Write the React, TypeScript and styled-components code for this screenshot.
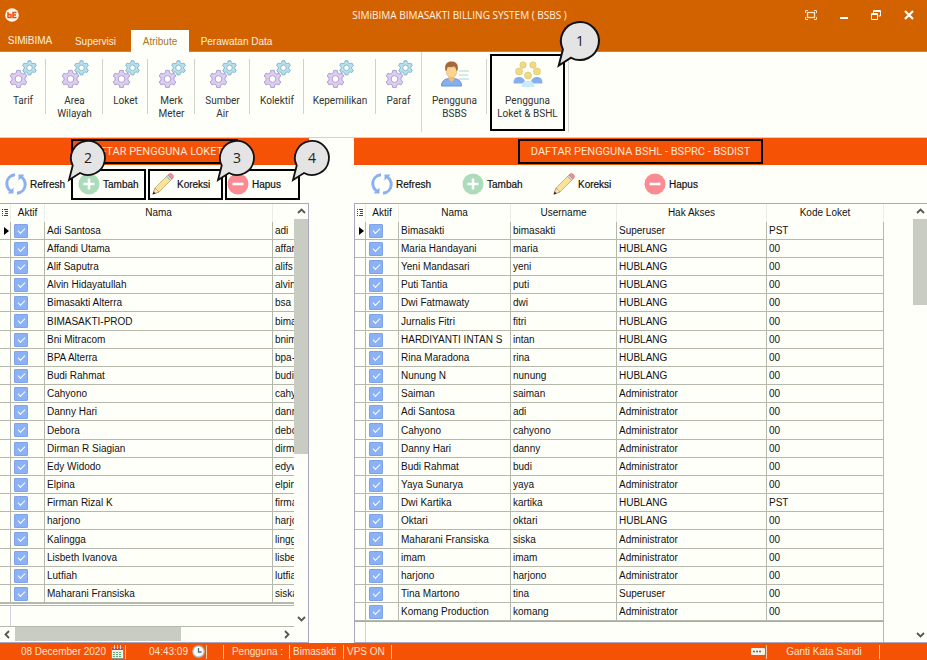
import React from 'react';
import styled, { createGlobalStyle } from 'styled-components';

const paper = '#fffffa';
const rust = '#d26200';
const flame = '#f55206';
const line = '#b5b9ac';
const lilac = '#aaa6bd';
const shade = '#c9ccc2';

const GlobalStyle = createGlobalStyle`
  *, *::before, *::after { box-sizing: border-box; }
  body { margin: 0; background: ${paper}; }
  button, input { font: inherit; color: inherit; }
  button { border: 0; padding: 0; background: none; cursor: pointer; }
  svg { display: block; }
`;

const Shell = styled.div`
  min-height: 100vh;
  display: flex;
  flex-direction: column;
  background: ${paper};
  color: #222;
  font: 10px/13px "Liberation Sans", Arial, sans-serif;
`;

/* ---------- title bar and tabs ---------- */

const Header = styled.header`
  background: ${rust};
  color: #fff3e4;
  border-bottom: 1px solid #c98250;
`;

const TitleBar = styled.div`
  height: 29px;
  display: grid;
  grid-template-columns: 1fr auto 1fr;
  align-items: center;
  padding: 0 13px 0 5px;
`;

const AppTitle = styled.h1`
  margin: 0;
  font: 400 10px/16px "Open Sans", "Noto Sans", sans-serif;
`;

const WindowButtons = styled.div`
  display: flex;
  justify-content: flex-end;
  gap: 23px;
`;

const Tabs = styled.nav`
  display: flex;
  align-items: flex-end;
  height: 22px;
`;

const Tab = styled.button<{ $active?: boolean; $lift?: boolean; $width: number }>`
  width: ${p => p.$width}px;
  height: 22px;
  padding-bottom: ${p => (p.$lift ? 2 : 0)}px;
  margin-bottom: -1px;
  color: ${p => (p.$active ? '#a8742c' : '#ffeedd')};
  background: ${p => (p.$active ? paper : 'transparent')};
`;

/* ---------- ribbon ---------- */

const Ribbon = styled.div`
  display: flex;
  height: 86px;
  border-bottom: 1px solid #d9cfc4;
`;

const RibbonGroup = styled.div`
  display: flex;
  height: 80px;
  border-right: 1px solid #d4d6cf;
`;

const RibbonItem = styled.button<{ $width: number; $ruled?: boolean; $marked?: boolean }>`
  position: relative;
  width: ${p => p.$width}px;
  height: ${p => (p.$marked ? 77 : 80)}px;
  margin: ${p => (p.$marked ? '2px 3px 0' : '0')};
  padding-top: ${p => (p.$marked ? 4 : 8)}px;
  border: ${p => (p.$marked ? '2px solid #000' : '0')};
  display: flex;
  flex-direction: column;
  align-items: center;
  gap: 6px;
  color: #333;
  font: 10px/13px Roboto, "Liberation Sans", sans-serif;
  text-align: center;
  white-space: pre-line;

  &::after {
    content: ${p => (p.$ruled ? '""' : 'none')};
    position: absolute;
    top: 7px;
    right: 0;
    height: 55px;
    border-right: 1px solid #d0d3ca;
  }
`;

/* ---------- panels ---------- */

const Panels = styled.main`
  flex: 1;
  display: grid;
  grid-template-columns: minmax(0, 309fr) minmax(0, 573fr);
  column-gap: 45px;
`;

const Panel = styled.section`
  display: flex;
  flex-direction: column;
`;

const PanelHead = styled.div`
  display: flex;
  justify-content: center;
  align-items: center;
  height: 27px;
  background: ${flame};
`;

const PanelTitle = styled.h2<{ $width: number }>`
  margin: 0;
  min-width: ${p => p.$width}px;
  text-align: center;
  border: 2px solid #000;
  color: #ffe6d2;
  font: 400 11px/21px Roboto, "Liberation Sans", sans-serif;
  white-space: nowrap;
`;

const Tools = styled.div<{ $roomy?: boolean }>`
  display: flex;
  align-items: center;
  height: 38px;
  gap: ${p => (p.$roomy ? 16 : 2)}px;
  padding-left: ${p => (p.$roomy ? 17 : 0)}px;
`;

const Tool = styled.button<{ $marked?: boolean; $pad?: number; $width?: number }>`
  position: relative;
  display: flex;
  align-items: center;
  gap: 3px;
  width: ${p => p.$width ?? 75}px;
  height: 31px;
  padding-left: ${p => p.$pad ?? 0}px;
  border: ${p => (p.$marked ? '2px solid #000' : '0')};
  color: #111;
  -webkit-text-stroke: 0.2px #111;
`;

const CalloutBox = styled.span<{ $x: number; $y: number; $size: number }>`
  position: absolute;
  z-index: 2;
  left: ${p => p.$x}px;
  top: ${p => p.$y}px;
  width: ${p => p.$size}px;
  height: ${p => p.$size}px;
  display: grid;
  place-items: center;
  color: #222;
  font: 14px/18px "Open Sans", "Noto Sans", sans-serif;
  -webkit-text-stroke: 0;

  svg { position: absolute; inset: 0; overflow: visible; }
  b { position: relative; font-weight: 400; }
`;

/* ---------- data grids ---------- */

const GridFrame = styled.div<{ $side: 'left' | 'right' }>`
  flex: 1;
  display: flex;
  border: 0 solid ${lilac};
  border-top-width: 1px;
  border-bottom-width: 1px;
  border-${p => (p.$side === 'left' ? 'right' : 'left')}-width: 1px;
`;

const GridMain = styled.div<{ $inset: number }>`
  flex: 1;
  min-width: 0;
  display: flex;
  flex-direction: column;
  overflow: hidden;
  margin-right: ${p => p.$inset}px;
`;

const Table = styled.table<{ $width: string }>`
  width: ${p => p.$width};
  table-layout: fixed;
  border-collapse: separate;
  border-spacing: 0;
  color: #111;

  th {
    height: 18px;
    padding: 0 0 1px;
    font-weight: 400;
    border-right: 1px solid #eceee6;
  }
  td {
    height: 18px;
    padding: 0 2px;
    line-height: 13px;
    white-space: nowrap;
    overflow: hidden;
    border-right: 1px solid ${line};
    border-bottom: 1px solid ${line};
  }
  tr:nth-child(6n) td { height: 19px; }
  td:first-child { padding: 0 0 0 2px; }
  svg { margin: 0 auto 0 2px; }
`;

const Tick = styled.input`
  appearance: none;
  position: relative;
  display: block;
  width: 14px;
  height: 14px;
  margin: 0 0 0 1px;
  border: 1px solid #7ea4e6;
  border-radius: 1px;
  background: #8bb1f6;

  &:checked::after {
    content: "";
    position: absolute;
    left: 3px;
    top: 3px;
    width: 7px;
    height: 4px;
    border: solid #fff;
    border-width: 0 0 1px 1px;
    transform: rotate(-45deg);
  }
`;

const GridFoot = styled.div<{ $double?: boolean }>`
  flex: 1;
  border-top: ${p => (p.$double ? `3px double ${line}` : `1px solid ${lilac}`)};
  border-right: ${p => (p.$double ? '0' : `1px solid ${line}`)};
  padding-left: 10px;

  &::before {
    content: "";
    display: block;
    height: 100%;
    border-left: 1px solid #d3d0e2;
  }
`;

const HScroll = styled.div`
  display: flex;
  height: 16px;
  border-top: 1px solid ${line};
`;

const VScroll = styled.div<{ $foot: number }>`
  display: flex;
  flex-direction: column;
  width: 14px;
  padding-bottom: ${p => p.$foot}px;
`;

const ArrowButton = styled.button`
  display: grid;
  place-items: center;
  min-width: 15px;
  height: 15px;
`;

const Track = styled.div`
  flex: 1;
`;

const Thumb = styled.div<{ $w: string; $h: string }>`
  width: ${p => p.$w};
  height: ${p => p.$h};
  background: ${shade};
`;

/* ---------- status bar ---------- */

const StatusBar = styled.footer`
  display: flex;
  align-items: center;
  height: 17px;
  background: ${flame};
  color: #ffe3cf;
`;

const StatusCell = styled.div<{ $width: number; $end?: boolean; $gap?: number }>`
  display: flex;
  align-items: center;
  justify-content: ${p => (p.$end ? 'flex-end' : 'flex-start')};
  gap: ${p => p.$gap ?? 4}px;
  width: ${p => p.$width}px;
  height: 14px;
  padding: 0 1px 0 3px;
  border-right: 1px solid #ffc9a4;
  white-space: nowrap;
`;

const StatusEnd = styled.div`
  width: 47px;
`;

const PasswordLink = styled.a`
  width: 100%;
  text-align: center;
  color: inherit;
  text-decoration: none;
`;

const Spacer = styled.div`
  flex: 1;
`;

/* ---------- drawings ---------- */

function gearPath(cx: number, cy: number, outer: number, inner: number) {
  const pts: string[] = [];
  for (let i = 0; i < 6; i++) {
    const a = (i * Math.PI) / 3 - Math.PI / 2;
    const steps: [number, number][] = [[-0.32, inner], [-0.2, outer], [0.2, outer], [0.32, inner]];
    steps.forEach(([d, r]) => {
      pts.push(`${(cx + r * Math.cos(a + d)).toFixed(2)} ${(cy + r * Math.sin(a + d)).toFixed(2)}`);
    });
  }
  return `M${pts.join('L')}Z`;
}

const Gears = () => (
  <svg width="28" height="28" viewBox="0 0 28 28" aria-hidden="true">
    <path d={gearPath(20.5, 7.8, 7.2, 5.4)} fill="#b9e0f0" stroke="#86b8cc" />
    <circle cx="20.5" cy="7.8" r="2.8" fill={paper} stroke="#86b8cc" />
    <path d={gearPath(9.5, 19, 8.8, 6.6)} fill="#dccdf4" stroke="#af9fcc" />
    <circle cx="9.5" cy="19" r="3.4" fill={paper} stroke="#af9fcc" />
  </svg>
);

const Person = () => (
  <svg width="28" height="28" viewBox="0 0 28 28" aria-hidden="true">
    <path d="M18 11h10M18 15h9M18 19h10" stroke="#c8e2e6" strokeWidth="1.5" />
    <path d="M0.5 26c0-5 3-7 7.500-7.500h5c4.500.5 7.500 2.500 7.500 7.500z" fill="#86aff0" stroke="#6792d6" />
    <path d="M7.500 15h6v4l-3 3-3-3z" fill="#f0c078" />
    <path d="M5.500 7h10v5c0 3-2.500 6-5 6s-5-3-5-6z" fill="#fbd491" stroke="#dba75c" strokeWidth=".6" />
    <path d="M4.500 11C3 4 6 1.500 10.500 1.500S18 4 16.500 11l-1.500-1c0-2-.5-3-2-3.500-3 .8-5 .6-6 .5-.8.6-1 1.500-1 3z" fill="#a5683c" />
  </svg>
);

const People = () => (
  <svg width="30" height="28" viewBox="0 0 30 28" aria-hidden="true">
    <g fill="#efdb86" stroke="#dcc470" strokeWidth=".7">
      <circle cx="10" cy="5" r="3.200" />
      <circle cx="20" cy="5" r="3.200" />
      <circle cx="6" cy="11.500" r="3.500" />
      <circle cx="24" cy="11.500" r="3.500" />
      <circle cx="15" cy="15.500" r="3.500" />
    </g>
    <path d="M.5 23.500c0-4.500 2-6.500 5.500-6.500s5 2 6 4l-2 2.500zM29.500 23.500c0-4.500-2-6.500-5.500-6.500s-5 2-6 4l2 2.500z" fill="#86aff0" />
    <path d="M8.500 27c0-4 2.500-6 6.500-6s6.500 2 6.500 6z" fill="#c9ecfb" />
  </svg>
);

const RefreshIcon = () => (
  <svg width="22" height="22" viewBox="0 0 22 22" fill="none" stroke="#8ab0f0" strokeWidth="3" aria-hidden="true">
    <path d="M10 1.800C5 2.300 1.800 6 1.800 10.500c0 3.300 1.700 6.200 4.700 8" />
    <path d="M12 20.200c5-.5 8.200-4.200 8.200-8.700 0-3.300-1.700-6.200-4.700-8" />
    <path d="M2.500 20.500H8.500V14.500zM19.500 1.500H13.500V7.500z" fill="#8ab0f0" stroke="none" />
  </svg>
);

const PlusIcon = () => (
  <svg width="22" height="22" viewBox="0 0 22 22" aria-hidden="true">
    <circle cx="11" cy="11" r="10.500" fill="#addcba" />
    <path d="M11 5.500v11M5.500 11h11" stroke="#fff" strokeWidth="2.600" />
  </svg>
);

const MinusIcon = () => (
  <svg width="22" height="22" viewBox="0 0 22 22" aria-hidden="true">
    <circle cx="11" cy="11" r="10.500" fill="#fb8b92" />
    <path d="M5.500 11h11" stroke="#fff" strokeWidth="2.600" />
  </svg>
);

const PencilIcon = () => (
  <svg width="22" height="22" viewBox="0 0 22 22" strokeLinejoin="round" aria-hidden="true">
    <path d="M1 21l2-6L15 3l4 4L7 19z" fill="#fbe29a" stroke="#b09c60" strokeWidth=".7" />
    <path d="M1 21l2-6 4 4z" fill="#f7e5c2" stroke="#9c8a58" strokeWidth=".6" />
    <path d="M.6 21.400l1-3 2 2z" fill="#222" />
    <path d="M14.500 3.500L16 2l4 4-1.500 1.500z" fill="#c3dbe6" stroke="#7894a0" strokeWidth=".6" />
    <path d="M16 2C17.500.2 19.200.3 20.500 1.500s1.500 2.700-.5 4.500z" fill="#f58f92" stroke="#c86f74" strokeWidth=".6" />
  </svg>
);

const Logo = () => (
  <svg width="14" height="14" viewBox="0 0 14 14" aria-hidden="true">
    <circle cx="7" cy="7" r="6.800" fill="#fff6ee" />
    <path d="M3 4v5.500h3v-3H3M11.500 4.500H8v5h3.500M8 7h3" fill="none" stroke="#e8500c" strokeWidth="1.500" />
  </svg>
);

const FitIcon = () => (
  <svg width="12" height="10" viewBox="0 0 12 10" fill="none" stroke="#ffe3c8" aria-hidden="true">
    <path d="M.5 3V.5H3M9 .5h2.500V3M11.500 7v2.500H9M3 9.500H.5V7" />
    <rect x="2.500" y="2.500" width="7" height="5" strokeWidth="1.300" />
  </svg>
);

const MinimizeIcon = () => (
  <svg width="8" height="10" viewBox="0 0 8 10" aria-hidden="true">
    <path d="M0 8h8" stroke="#fff" strokeWidth="2" />
  </svg>
);

const RestoreIcon = () => (
  <svg width="10" height="10" viewBox="0 0 10 10" fill="none" stroke="#fff" aria-hidden="true">
    <path d="M2.500 3V.500h7v5.500H7.500M2.500 1.500h7M.5 3.500h6v6h-6zM.5 4.500h6" />
  </svg>
);

const CloseIcon = () => (
  <svg width="10" height="10" viewBox="0 0 10 10" aria-hidden="true">
    <path d="M1 1l8 8M9 1L1 9" stroke="#fff" strokeWidth="2.200" />
  </svg>
);

const turns = { up: 0, right: 90, down: 180, left: 270 };

const Chevron = ({ dir }: { dir: keyof typeof turns }) => (
  <svg width="9" height="9" viewBox="0 0 9 9" aria-hidden="true">
    <path d="M1 6l3.500-3.500L8 6" fill="none" stroke="#555" strokeWidth="1.800" transform={`rotate(${turns[dir]} 4.5 4.5)`} />
  </svg>
);

const MenuMark = () => (
  <svg width="7" height="8" viewBox="0 0 7 8" aria-hidden="true">
    <path d="M0 .500h1M2 .500h4M0 2.500h1M3 2.500h3M0 4.500h1M3 4.500h3M0 6.500h1M2 6.500h4" stroke="#444" />
  </svg>
);

const RowMark = () => (
  <svg width="5" height="8" viewBox="0 0 5 8" aria-label="Baris aktif">
    <path d="M0 0l5 4-5 4z" fill="#000" />
  </svg>
);

const CalendarIcon = () => (
  <svg width="13" height="14" viewBox="0 0 13 14" aria-hidden="true">
    <rect x=".5" y="2.500" width="12" height="11" fill="#eef1ea" stroke="#8b8d86" />
    <path d="M1 4h11" stroke="#d9403a" strokeWidth="2" />
    <path d="M3.500 0v4M6.500 0v4M9.500 0v4" stroke="#ddd" />
    <path d="M2 7.500h9M2 9.500h9M2 11.500h9" stroke="#5fa878" strokeDasharray="2 1" />
  </svg>
);

const ClockIcon = () => (
  <svg width="13" height="13" viewBox="0 0 13 13" aria-hidden="true">
    <circle cx="6.500" cy="6.500" r="5.700" fill="#f4fafa" stroke="#a9bcc0" strokeWidth="1.200" />
    <path d="M6.500 3v4h3" fill="none" stroke="#4f7280" strokeWidth="1.300" />
  </svg>
);

const KeyIcon = () => (
  <svg width="14" height="7" viewBox="0 0 14 7" aria-hidden="true">
    <rect width="14" height="7" rx="1" fill="#f3f1e6" />
    <path d="M2 3.500h8" stroke="#6b6b66" strokeWidth="1.600" strokeDasharray="2 1" />
  </svg>
);

const Callout = ({ n, x, y, size = 34 }: { n: number; x: number; y: number; size?: number }) => (
  <CalloutBox $x={x} $y={y} $size={size}>
    <svg width={size} height={size} viewBox="-17 -17 34 34" aria-hidden="true">
      <path d="M-19 22L-15.300 7.500A17 17 0 1 1-8 15Z" fill="#e4e4e4" stroke="#111" strokeWidth="1.800" />
    </svg>
    <b>{n}</b>
  </CalloutBox>
);

/* ---------- data ---------- */

const attributes: [string, number][] = [
  ['Tarif', 46], ['Area\nWilayah', 57], ['Loket', 45], ['Merk\nMeter', 47],
  ['Sumber\nAir', 55], ['Kolektif', 54], ['Kepemilikan', 72], ['Paraf', 45],
];

const loketUsers: [string, string][] = [
  ['Adi Santosa', 'adi'], ['Affandi Utama', 'affandi'], ['Alif Saputra', 'alifs'],
  ['Alvin Hidayatullah', 'alvin'], ['Bimasakti Alterra', 'bsa'], ['BIMASAKTI-PROD', 'bimasakti'],
  ['Bni Mitracom', 'bnimitra'], ['BPA Alterra', 'bpa-alterra'], ['Budi Rahmat', 'budi'],
  ['Cahyono', 'cahyono'], ['Danny Hari', 'danny'], ['Debora', 'debora'],
  ['Dirman R Siagian', 'dirman'], ['Edy Widodo', 'edywidodo'], ['Elpina', 'elpina'],
  ['Firman Rizal K', 'firman'], ['harjono', 'harjono'], ['Kalingga', 'lingga'],
  ['Lisbeth Ivanova', 'lisbeth'], ['Lutfiah', 'lutfiah'], ['Maharani Fransiska', 'siska'],
];

const bshlUsers: [string, string, string, string][] = [
  ['Bimasakti', 'bimasakti', 'Superuser', 'PST'],
  ['Maria Handayani', 'maria', 'HUBLANG', '00'],
  ['Yeni Mandasari', 'yeni', 'HUBLANG', '00'],
  ['Puti Tantia', 'puti', 'HUBLANG', '00'],
  ['Dwi Fatmawaty', 'dwi', 'HUBLANG', '00'],
  ['Jurnalis Fitri', 'fitri', 'HUBLANG', '00'],
  ['HARDIYANTI INTAN S', 'intan', 'HUBLANG', '00'],
  ['Rina Maradona', 'rina', 'HUBLANG', '00'],
  ['Nunung N', 'nunung', 'HUBLANG', '00'],
  ['Saiman', 'saiman', 'Administrator', '00'],
  ['Adi Santosa', 'adi', 'Administrator', '00'],
  ['Cahyono', 'cahyono', 'Administrator', '00'],
  ['Danny Hari', 'danny', 'Administrator', '00'],
  ['Budi Rahmat', 'budi', 'Administrator', '00'],
  ['Yaya Sunarya', 'yaya', 'Administrator', '00'],
  ['Dwi Kartika', 'kartika', 'HUBLANG', 'PST'],
  ['Oktari', 'oktari', 'HUBLANG', '00'],
  ['Maharani Fransiska', 'siska', 'Administrator', '00'],
  ['imam', 'imam', 'Administrator', '00'],
  ['harjono', 'harjono', 'Administrator', '00'],
  ['Tina Martono', 'tina', 'Superuser', '00'],
  ['Komang Production', 'komang', 'Administrator', '00'],
];

/* ---------- parts ---------- */

type UserTableProps = { heads: string[]; rows: string[][]; cols: (number | undefined)[]; width: string };

const UserTable = ({ heads, rows, cols, width }: UserTableProps) => (
  <Table $width={width}>
    <colgroup>
      {cols.map((w, i) => <col key={i} width={w} />)}
    </colgroup>
    <thead>
      <tr>
        <th aria-label="Menu"><MenuMark /></th>
        <th>Aktif</th>
        {heads.map(h => <th key={h}>{h}</th>)}
      </tr>
    </thead>
    <tbody>
      {rows.map((row, r) => (
        <tr key={r}>
          <td>{r === 0 && <RowMark />}</td>
          <td><Tick type="checkbox" defaultChecked aria-label={`Aktif ${row[0]}`} /></td>
          {row.map((cell, c) => <td key={c}>{cell}</td>)}
        </tr>
      ))}
    </tbody>
  </Table>
);

const VerticalScroll = ({ thumb, foot }: { thumb: string; foot: number }) => (
  <VScroll $foot={foot}>
    <ArrowButton aria-label="Gulir ke atas"><Chevron dir="up" /></ArrowButton>
    <Track><Thumb $w="100%" $h={thumb} /></Track>
    <ArrowButton aria-label="Gulir ke bawah"><Chevron dir="down" /></ArrowButton>
  </VScroll>
);

export default function App() {
  return (
    <Shell>
      <GlobalStyle />
      <Header>
        <TitleBar>
          <Logo />
          <AppTitle>SIMiBIMA BIMASAKTI BILLING SYSTEM ( BSBS )</AppTitle>
          <WindowButtons>
            <button aria-label="Layar penuh"><FitIcon /></button>
            <button aria-label="Kecilkan"><MinimizeIcon /></button>
            <button aria-label="Pulihkan"><RestoreIcon /></button>
            <button aria-label="Tutup"><CloseIcon /></button>
          </WindowButtons>
        </TitleBar>
        <Tabs>
          <Tab $width={60} $lift>SIMiBIMA</Tab>
          <Tab $width={71}>Supervisi</Tab>
          <Tab $width={58} $active>Atribute</Tab>
          <Tab $width={95}>Perawatan Data</Tab>
        </Tabs>
      </Header>

      <Ribbon>
        <RibbonGroup>
          {attributes.map(([label, width], i) => (
            <RibbonItem key={label} $width={width} $ruled={i < attributes.length - 1}>
              <Gears />
              {label}
            </RibbonItem>
          ))}
        </RibbonGroup>
        <RibbonGroup>
          <RibbonItem $width={65} $ruled><Person />{'Pengguna\nBSBS'}</RibbonItem>
          <RibbonItem $width={75} $marked>
            <People />
            {'Pengguna\nLoket & BSHL'}
            <Callout n={1} x={69} y={-34} size={38} />
          </RibbonItem>
        </RibbonGroup>
      </Ribbon>

      <Panels>
        <Panel>
          <PanelHead><PanelTitle $width={167}>DAFTAR PENGGUNA LOKET</PanelTitle></PanelHead>
          <Tools>
            <Tool $pad={5} $width={69}><RefreshIcon />Refresh</Tool>
            <Tool $marked $pad={5}><PlusIcon />Tambah<Callout n={2} x={-2} y={-30} /></Tool>
            <Tool $marked $pad={2}><PencilIcon />Koreksi<Callout n={3} x={70} y={-30} /></Tool>
            <Tool $marked><MinusIcon />Hapus<Callout n={4} x={68} y={-30} /></Tool>
          </Tools>
          <GridFrame $side="left">
            <GridMain $inset={0}>
              <UserTable heads={['Nama', '']} rows={loketUsers} cols={[11, 34, 228, undefined]} width="calc(100% + 80px)" />
              <GridFoot $double />
              <HScroll>
                <ArrowButton aria-label="Gulir ke kiri"><Chevron dir="left" /></ArrowButton>
                <Track><Thumb $w="63%" $h="14px" /></Track>
                <ArrowButton aria-label="Gulir ke kanan"><Chevron dir="right" /></ArrowButton>
              </HScroll>
            </GridMain>
            <VerticalScroll thumb="60%" foot={16} />
          </GridFrame>
        </Panel>

        <Panel>
          <PanelHead><PanelTitle $width={245}>DAFTAR PENGGUNA BSHL - BSPRC - BSDIST</PanelTitle></PanelHead>
          <Tools $roomy>
            <Tool><RefreshIcon />Refresh</Tool>
            <Tool><PlusIcon />Tambah</Tool>
            <Tool><PencilIcon />Koreksi</Tool>
            <Tool><MinusIcon />Hapus</Tool>
          </Tools>
          <GridFrame $side="right">
            <GridMain $inset={29}>
              <UserTable
                heads={['Nama', 'Username', 'Hak Akses', 'Kode Loket']}
                rows={bshlUsers}
                cols={[11, 33, 112, 106, 150, undefined]}
                width="100%"
              />
              <GridFoot />
            </GridMain>
            <VerticalScroll thumb="21%" foot={0} />
          </GridFrame>
        </Panel>
      </Panels>

      <StatusBar>
        <StatusCell $width={126} $end $gap={5}>08 December 2020 <CalendarIcon /></StatusCell>
        <StatusCell $width={81} $end>04:43:09 <ClockIcon /></StatusCell>
        <StatusCell $width={17} />
        <StatusCell $width={66} $end $gap={0}><Spacer />Pengguna :<Spacer /></StatusCell>
        <StatusCell $width={54}>Bimasakti</StatusCell>
        <StatusCell $width={48}>VPS ON</StatusCell>
        <Spacer />
        <StatusCell $width={20} $end><KeyIcon /></StatusCell>
        <StatusCell $width={113}><PasswordLink href="#sandi">Ganti Kata Sandi</PasswordLink></StatusCell>
        <StatusEnd />
      </StatusBar>
    </Shell>
  );
}
